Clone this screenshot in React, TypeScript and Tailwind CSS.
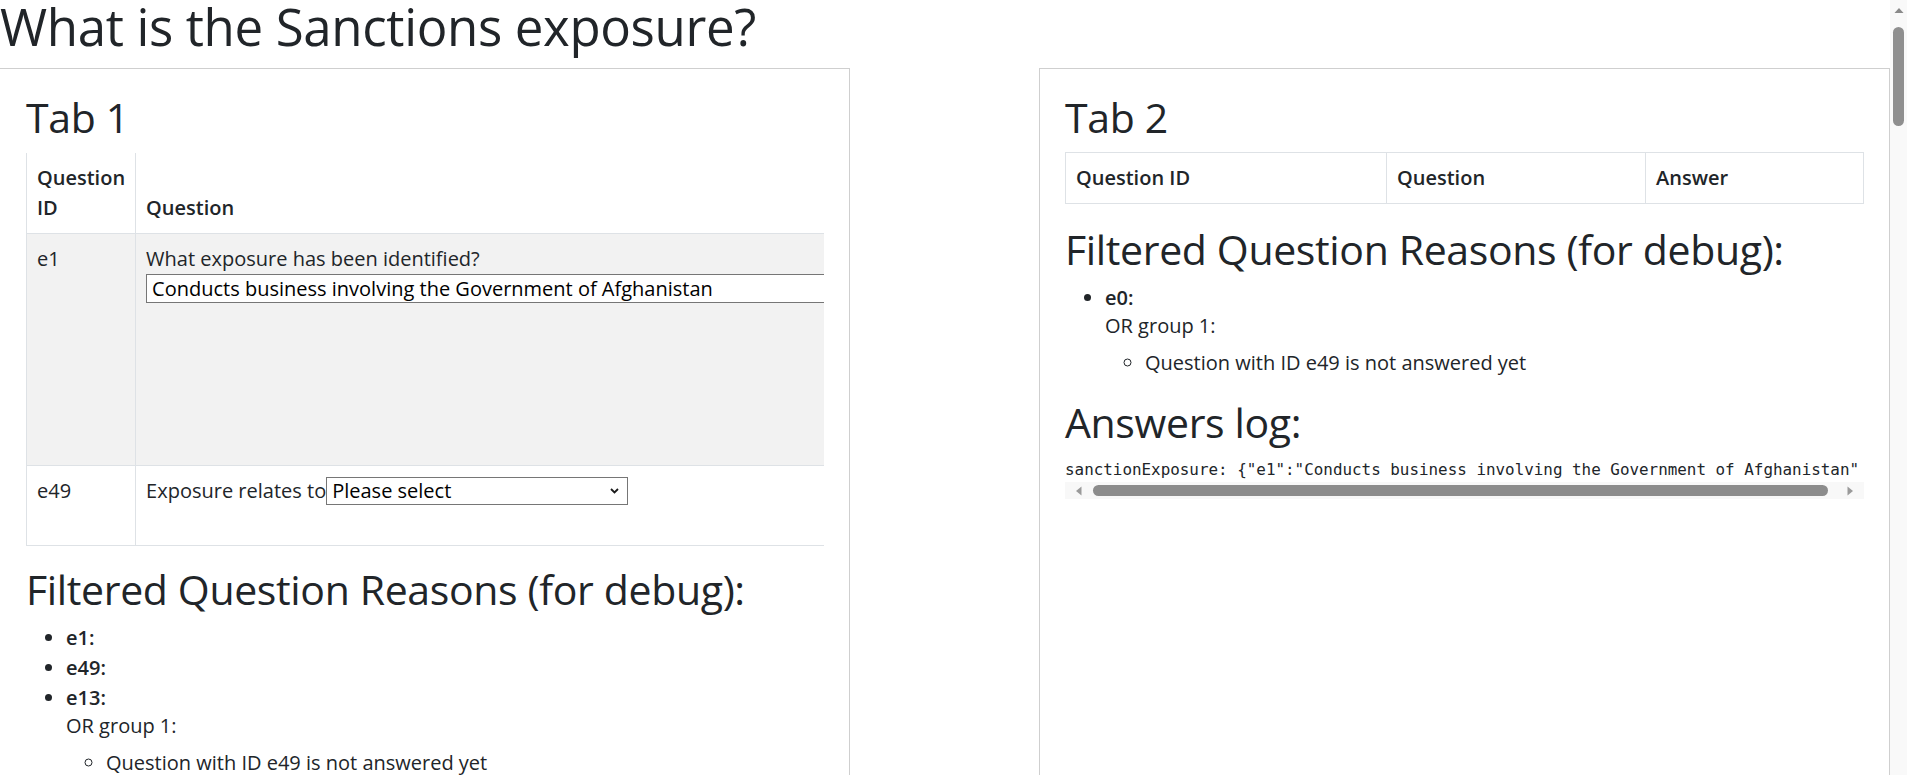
import React from "react";

const SELECT_CHEVRON = (
  <svg width="9" height="6" viewBox="0 0 9 6" className="shrink-0">
    <path d="M1 1l3.5 3.5L8 1" fill="none" stroke="#1a1a1a" strokeWidth="1.8" />
  </svg>
);

function HScrollbar() {
  return (
    <div className="flex h-[17px] items-center bg-[#f8f8f8] px-[10px]">
      <svg width="8" height="10" viewBox="0 0 8 10" className="shrink-0">
        <path d="M1 5l5.5-4.5v9z" fill="#9a9a9a" />
      </svg>
      <div className="mr-[18px] ml-[10px] h-[11px] flex-1 rounded-full bg-[#8c8c8c]" />
      <svg width="8" height="10" viewBox="0 0 8 10" className="shrink-0">
        <path d="M7 5L1.5 0.5v9z" fill="#9a9a9a" />
      </svg>
    </div>
  );
}

function PageScrollbar() {
  return (
    <div className="flex w-[17px] shrink-0 flex-col items-center bg-[#f9f9f9]">
      <svg width="10" height="8" viewBox="0 0 10 8" className="mt-[7px]">
        <path d="M5 1l4.5 5H0.5z" fill="#8a8a8a" />
      </svg>
      <div className="mt-[12px] h-[99px] w-[11px] rounded-full bg-[#8f8f8f]" />
    </div>
  );
}

function TabOne() {
  return (
    <section className="h-[900px] w-[850px] shrink-0 border-t border-r border-[#cfcfcf] pt-[24px] pr-[25px] pl-[26px]">
      <h2 className="mb-[12px] text-[41px] leading-[48px] tracking-[-0.35px]">Tab 1</h2>
      <div className="overflow-hidden">
        <table className="-mt-px w-[1150px] border-collapse text-[20px] leading-[30px]">
          <thead>
            <tr className="h-[80px]">
              <th className="w-[108px] border border-[#dee2e6] p-[10px] text-left align-bottom font-semibold">
                Question ID
              </th>
              <th className="border border-[#dee2e6] p-[10px] text-left align-bottom font-semibold">Question</th>
            </tr>
          </thead>
          <tbody>
            <tr className="h-[232px] bg-[#f2f2f2]">
              <td className="border border-[#dee2e6] p-[10px] align-top">e1</td>
              <td className="border border-[#dee2e6] p-[10px] align-top">
                <div>What exposure has been identified?</div>
                <input
                  readOnly
                  value="Conducts business involving the Government of Afghanistan"
                  className="block h-[29px] w-[980px] border border-[#767676] bg-white px-[5px] text-[20px] leading-[27px] text-black outline-none"
                />
              </td>
            </tr>
            <tr className="h-[80px]">
              <td className="border border-[#dee2e6] p-[10px] align-top">e49</td>
              <td className="border border-[#dee2e6] p-[10px] align-top">
                Exposure relates to
                <span className="inline-flex h-[28px] w-[302px] items-center border border-[#767676] bg-white pr-[8px] pl-[5px] align-baseline text-black">
                  <span className="flex-1">Please select</span>
                  {SELECT_CHEVRON}
                </span>
              </td>
            </tr>
          </tbody>
        </table>
      </div>
      <h2 className="mt-[19px] text-[41px] leading-[48px] tracking-[-0.35px]">
        Filtered Question Reasons (for debug):
      </h2>
      <ul className="mt-[10px] list-disc pl-[40px] text-[20px] leading-[30px]">
        <li>
          <b className="font-semibold">e1:</b>
        </li>
        <li>
          <b className="font-semibold">e49:</b>
        </li>
        <li>
          <b className="font-semibold">e13:</b>
          <div className="-mt-[2px]">OR group 1:</div>
          <ul className="mt-[7px] list-[circle] pl-[40px]">
            <li>Question with ID e49 is not answered yet</li>
          </ul>
        </li>
      </ul>
    </section>
  );
}

function TabTwo() {
  return (
    <section className="h-[900px] w-[851px] shrink-0 border-t border-r border-l border-[#cfcfcf] px-[25px] pt-[24px]">
      <h2 className="mb-[12px] text-[41px] leading-[48px] tracking-[-0.35px]">Tab 2</h2>
      <table className="-mt-px w-full border-collapse text-[20px] leading-[30px]">
        <thead>
          <tr className="h-[51px]">
            <th className="w-[321px] border border-[#dee2e6] p-[10px] text-left align-bottom font-semibold">Question ID</th>
            <th className="w-[259px] border border-[#dee2e6] p-[10px] text-left align-bottom font-semibold">Question</th>
            <th className="border border-[#dee2e6] p-[10px] text-left align-bottom font-semibold">Answer</th>
          </tr>
        </thead>
        <tbody />
      </table>
      <h2 className="mt-[21px] text-[41px] leading-[48px] tracking-[-0.35px]">
        Filtered Question Reasons (for debug):
      </h2>
      <ul className="mt-[10px] list-disc pl-[40px] text-[20px] leading-[30px]">
        <li>
          <b className="font-semibold">e0:</b>
          <div className="-mt-[2px]">OR group 1:</div>
          <ul className="mt-[7px] list-[circle] pl-[40px]">
            <li>Question with ID e49 is not answered yet</li>
          </ul>
        </li>
      </ul>
      <h2 className="mt-[20px] text-[41px] leading-[48px] tracking-[-0.35px]">Answers log:</h2>
      <div className="mt-[12px] mr-[4px] overflow-hidden">
        <pre className="font-['DejaVu_Sans_Mono',monospace] text-[15.9px] leading-[24px] whitespace-pre">
          {'sanctionExposure: {"e1":"Conducts business involving the Government of Afghanistan"}'}
        </pre>
      </div>
      <HScrollbar />
    </section>
  );
}

export default function App() {
  return (
    <div className="flex h-[775px] w-full overflow-hidden bg-white font-['Open_Sans','Noto_Sans',sans-serif] text-[#212529]">
      <div className="min-w-0 flex-1 overflow-hidden">
        <h1 className="-mt-[7px] mb-[8px] text-[51px] leading-[67px] tracking-[-0.35px] whitespace-nowrap">
          What is the Sanctions exposure?
        </h1>
        <div className="flex justify-between">
          <TabOne />
          <TabTwo />
        </div>
      </div>
      <PageScrollbar />
    </div>
  );
}
